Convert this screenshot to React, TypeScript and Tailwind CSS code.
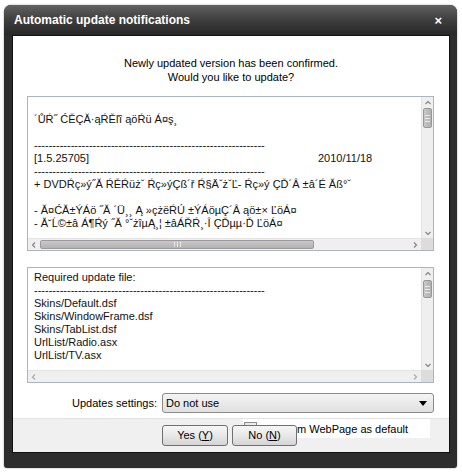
import React from "react";

type Dir = "up" | "down" | "left" | "right";

function Chevron({ dir, light }: { dir: Dir; light?: boolean }) {
  const paths: Record<Dir, string> = {
    up: "M1.5 5 L4 2.5 L6.5 5",
    down: "M1.5 3 L4 5.5 L6.5 3",
    left: "M5 1.5 L2.5 4 L5 6.5",
    right: "M3 1.5 L5.5 4 L3 6.5",
  };
  return (
    <svg width="8" height="8" viewBox="0 0 8 8">
      <path d={paths[dir]} fill="none" stroke={light ? "#a8a8a8" : "#808080"} strokeWidth="1.1" />
    </svg>
  );
}

function VScroll({ thumbH, gapTop }: { thumbH: number; gapTop: number }) {
  return (
    <div className="w-[12px] h-full flex flex-col bg-[#efefef] border-l border-[#e4e4e4]">
      <div className="h-[11px] flex items-center justify-center">
        <Chevron dir="up" />
      </div>
      <div style={{ height: thumbH, marginTop: gapTop }} className="mx-[1px] rounded-[2px] border border-[#989898] bg-gradient-to-r from-[#c8c8c8] to-[#b0b0b0] flex flex-col items-center justify-center gap-[2px]">
        <div className="w-[5px] h-[1px] bg-[#e8e8e8]" />
        <div className="w-[5px] h-[1px] bg-[#e8e8e8]" />
        <div className="w-[5px] h-[1px] bg-[#e8e8e8]" />
      </div>
      <div className="flex-1" />
      <div className="h-[11px] flex items-center justify-center">
        <Chevron dir="down" />
      </div>
    </div>
  );
}

function HScroll({ thumbW }: { thumbW?: number }) {
  return (
    <div className="h-[12px] w-full flex bg-[#efefef] border-t border-[#e4e4e4]">
      <div className="w-[12px] flex items-center justify-center">
        <Chevron dir="left" light={!thumbW} />
      </div>
      {thumbW ? (
        <div style={{ width: thumbW }} className="my-[1px] rounded-[2px] border border-[#9a9a9a] bg-gradient-to-b from-[#cacaca] to-[#b2b2b2] flex items-center justify-center gap-[2px]">
          <div className="h-[5px] w-[1px] bg-[#e8e8e8]" />
          <div className="h-[5px] w-[1px] bg-[#e8e8e8]" />
          <div className="h-[5px] w-[1px] bg-[#e8e8e8]" />
        </div>
      ) : null}
      <div className="flex-1" />
      <div className="w-[12px] flex items-center justify-center">
        <Chevron dir="right" light={!thumbW} />
      </div>
    </div>
  );
}

const DASHES = "---------------------------------------------------------------";

function TextBox({
  height,
  lines,
  vThumb,
  vGap,
  hThumb,
}: {
  height: number;
  lines: React.ReactNode[];
  vThumb: number;
  vGap: number;
  hThumb?: number;
}) {
  return (
    <div
      style={{ height }}
      className="ml-[14px] mr-[15px] border border-[#a9b5c4] bg-white grid grid-cols-[1fr_12px] grid-rows-[1fr_12px]"
    >
      <div className="overflow-hidden pt-[3px] pl-[6px] text-[11px] leading-[13px] text-[#111] whitespace-pre">
        {lines.map((l, i) => (
          <div key={i} className="h-[13px]">
            {l}
          </div>
        ))}
      </div>
      <VScroll thumbH={vThumb} gapTop={vGap} />
      <HScroll thumbW={hThumb} />
      <div className="bg-[#dcdcdc]" />
    </div>
  );
}

export default function App() {
  const box1: React.ReactNode[] = [
    "",
    "´ŮŔ˝ ĆĚÇĂ·ąŔĚľî ąöŔü Á¤ş¸",
    "",
    DASHES,
    <span>
      <span className="inline-block w-[284px]">[1.5.25705]</span>2010/11/18
    </span>,
    DASHES,
    "+ DVDŔç»ý˝Ă ŔĚŔüżˇ Ŕç»ýÇß´ř Ŕ§ÄˇżˇĽ- Ŕç»ý ÇĎ´Â ±â´É Ăß°ˇ",
    "",
    "- Ă¤ĆĂ±ÝÁö ˝Ă ´Ü¸¸ Ą »çżëŔÚ ±ÝÁöµÇ´Â ąö±× ĽöÁ¤",
    "- Ă˘Ĺ©±â Á¶Ŕý ˝Ă °ˇżîµĄ¸¦ ±âÁŘŔ¸·Î ÇĎµµ·Ď ĽöÁ¤",
  ];
  const box2: React.ReactNode[] = [
    "Required update file:",
    DASHES,
    "Skins/Default.dsf",
    "Skins/WindowFrame.dsf",
    "Skins/TabList.dsf",
    "UrlList/Radio.asx",
    "UrlList/TV.asx",
  ];

  return (
    <div className="w-[462px] h-[473px] bg-white pt-[5px] pl-[4px] font-['Liberation_Sans',Arial,sans-serif]">
      <div className="w-[453px] h-[463px] rounded-t-[7px] rounded-b-[3px] bg-[#2d2d2d] flex flex-col pl-[8px] pr-[7px] pb-[15px] shadow-[0_0_2px_rgba(0,0,0,0.4)]">
        {/* Title bar */}
        <div className="-ml-[8px] -mr-[7px] h-[30px] rounded-t-[7px] bg-gradient-to-b from-[#626262] via-[#3e3e3e] to-[#282828] flex items-center pl-[10px] pr-[15px]">
          <span className="text-white font-bold text-[12px] leading-none">Automatic update notifications</span>
          <span className="ml-auto text-white font-bold text-[13px] leading-none">×</span>
        </div>

        {/* Content */}
        <div className="flex-1 border border-[#111] bg-white flex flex-col">
          <div className="pt-[20px] text-center text-[11px] leading-[14px] text-black">
            <div>Newly updated version has been confirmed.</div>
            <div>Would you like to update?</div>
          </div>

          <div className="mt-[12px]">
            <TextBox height={155} lines={box1} vThumb={20} vGap={0} hThumb={274} />
          </div>

          <div className="mt-[16px]">
            <TextBox height={116} lines={box2} vThumb={18} vGap={1} />
          </div>

          <div className="mt-[10px] h-[20px] flex items-center justify-end gap-[5px] mr-[15px]">
            <span className="text-[11px] text-black">Updates settings:</span>
            <div className="w-[272px] h-[20px] rounded-[3px] border border-[#8b8b8b] bg-gradient-to-b from-[#f4f4f4] to-[#e0e0e0] flex items-center pl-[3px] pr-[6px]">
              <span className="text-[11px] text-black">Do not use</span>
              <svg className="ml-auto" width="8" height="5" viewBox="0 0 8 5">
                <path d="M0 0 H8 L4 5 Z" fill="#000" />
              </svg>
            </div>
          </div>

          <div className="mt-[5px] h-[34px] relative bg-[#f0f0f0] border-t border-[#e2e2e2]">
            <div className="ml-[230px] w-[187px] h-[19px] bg-white flex items-start">
              <div className="mt-[3px] ml-[1px] w-[13px] h-[13px] border border-[#8f8f8f] bg-gradient-to-br from-[#e4e4e4] to-[#fafafa]" />
              <span className="ml-[40px] mt-[3px] text-[11px] leading-[14px] text-black">m WebPage as default</span>
            </div>
            <div className="absolute left-[149px] top-[6px] flex gap-[4px]">
              <button className="w-[66px] h-[21px] rounded-[3px] border border-[#707070] bg-gradient-to-b from-[#f6f6f6] via-[#e8e8e8] to-[#d4d4d4] text-[11px] text-black leading-none">
                Yes (<span className="underline">Y</span>)
              </button>
              <button className="w-[65px] h-[21px] rounded-[3px] border border-[#707070] bg-gradient-to-b from-[#f6f6f6] via-[#e8e8e8] to-[#d4d4d4] text-[11px] text-black leading-none">
                No (<span className="underline">N</span>)
              </button>
            </div>
          </div>
        </div>
      </div>
    </div>
  );
}
